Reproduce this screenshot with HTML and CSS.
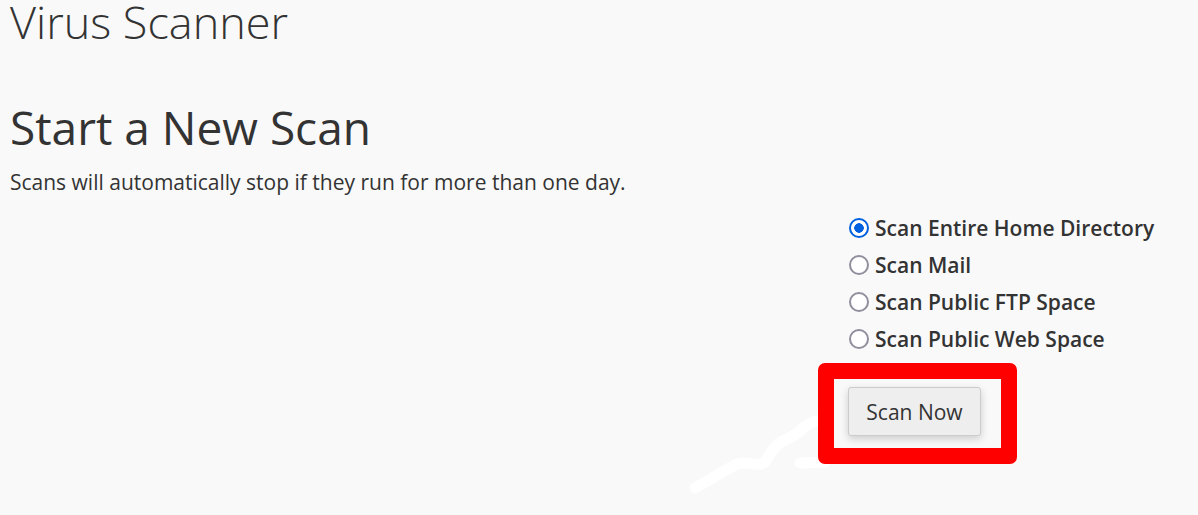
FILE: index.html
```html
<!DOCTYPE html>
<html>
<head>
<meta charset="utf-8">
<link rel="stylesheet" href="styles.css">
</head>
<body>
<div class="page">
  <h1 class="title">Virus Scanner</h1>
  <h2 class="section-title">Start a New Scan</h2>
  <p class="desc">Scans will automatically stop if they run for more than one day.</p>
  <form class="scan-form">
    <div class="options">
      <label class="option"><input type="radio" name="scan" checked><span>Scan Entire Home Directory</span></label>
      <label class="option"><input type="radio" name="scan"><span>Scan Mail</span></label>
      <label class="option"><input type="radio" name="scan"><span>Scan Public FTP Space</span></label>
      <label class="option"><input type="radio" name="scan"><span>Scan Public Web Space</span></label>
    </div>
    <div class="action">
      <div class="highlight">
        <button type="button" class="btn">Scan Now</button>
      </div>
    </div>
  </form>
  <svg class="scribble" width="150" height="90" viewBox="0 0 150 90">
    <path d="M10 78 C25 70 40 60 52 54 C62 50 72 58 80 52 C86 44 88 36 96 32 C104 28 110 26 116 20 C122 14 130 10 140 10 M115 53 L140 52" fill="none" stroke="#ffffff" stroke-width="11" stroke-linecap="round" stroke-linejoin="round"/>
  </svg>
</div>
</body>
</html>
```

FILE: styles.css
```css
html, body {
  margin: 0;
  padding: 0;
  background: #f9f9f9;
}
body {
  font-family: "Open Sans", "Noto Sans", sans-serif;
  color: #333333;
}
.page {
  position: relative;
  padding: 0 10px;
  height: 515px;
  overflow: hidden;
}
.title {
  margin: 0;
  font-weight: 300;
  font-size: 45px;
  line-height: 44px;
  color: #333;
}
.section-title {
  margin: 56px 0 0;
  font-weight: 400;
  font-size: 46px;
  line-height: 54px;
}
.desc {
  margin: 14px 0 0;
  font-size: 21px;
  line-height: 28px;
}
.scan-form {
  display: flex;
  flex-direction: column;
  padding-left: 839px;
  margin-top: 13px;
}
.options {
  display: flex;
  flex-direction: column;
}
.option {
  display: flex;
  align-items: center;
  height: 37px;
  font-weight: 600;
  font-size: 21px;
}
.option input {
  appearance: none;
  -webkit-appearance: none;
  margin: 0 6px 0 0;
  width: 20px;
  height: 20px;
  border-radius: 50%;
  border: 2px solid #8f8f9d;
  background: #fff;
  box-sizing: border-box;
}
.option input:checked {
  border: 2px solid #0060df;
  background: radial-gradient(circle, #0060df 0 4.5px, #fff 5px);
}
.action {
  display: flex;
  margin-top: 6px;
  margin-left: -31px;
}
.highlight {
  position: relative;
  z-index: 1;
  border: 16px solid #ff0000;
  border-radius: 7px;
  padding: 8px 20px 12px 14px;
}
.btn {
  font-family: "Open Sans", "Noto Sans", sans-serif;
  font-size: 21px;
  color: #333;
  background: #eeeeee;
  border: 1px solid #cccccc;
  border-radius: 3px;
  width: 133px;
  height: 49px;
  padding: 0;
  box-shadow: 0 3px 8px rgba(0,0,0,0.18);
}
.scribble {
  position: absolute;
  left: 685px;
  top: 410px;
}
```
